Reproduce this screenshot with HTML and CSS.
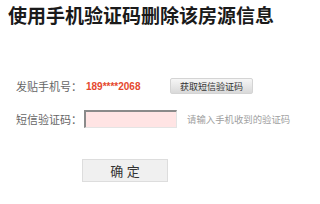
FILE: index.html
```html
<!DOCTYPE html>
<html lang="zh-CN">
<head>
    <meta charset="UTF-8">
    <title>使用手机验证码删除该房源信息</title>
    <link rel="stylesheet" href="styles.css">
</head>
<body>

<div class="page">
    <h2 class="title">使用手机验证码删除该房源信息</h2>

    <!-- 验证表单 -->
    <div class="verify-form">
        <div class="row">
            <span class="label">发贴手机号：</span>
            <span class="phone">189****2068</span>
            <button class="btn-code">获取短信验证码</button>
        </div>
        <div class="row">
            <span class="label">短信验证码：</span>
            <input type="text" class="code-input">
            <span class="hint">请输入手机收到的验证码</span>
        </div>
        <button class="btn-ok">确 定</button>
    </div>
</div>

</body>
</html>
```

FILE: styles.css
```css
body {
    margin: 0;
    padding: 0;
    background: #fff;
    font-family: "Liberation Sans", "Noto Sans CJK SC", sans-serif;
}

.page {
    padding: 6px 8px 0 8px;
}

.title {
    margin: 0;
    font-size: 19px;
    line-height: 22px;
    font-weight: bold;
    color: #1a1a1a;
}

.verify-form {
    padding-left: 8px;
    margin-top: 49px;
}

.row {
    display: flex;
    align-items: center;
    height: 18px;
    margin-bottom: 15px;
}

.label {
    width: 68px;
    font-size: 11px;
    color: #666;
}

.phone {
    width: 84px;
    padding-left: 2px;
    font-size: 10px;
    font-weight: bold;
    color: #e5482d;
}

.btn-code {
    height: 16px;
    width: 83px;
    padding: 0;
    border: 1px solid #d4d4d4;
    border-radius: 2px;
    background: linear-gradient(#f6f6f6, #d9d9d9);
    font-family: inherit;
    font-size: 9px;
    color: #333;
}

.code-input {
    box-sizing: border-box;
    width: 93px;
    height: 18px;
    margin: 0;
    padding: 0 3px;
    border-style: solid;
    border-width: 2px 1px 1px 2px;
    border-color: #8a8a8a #e4e4e4 #e4e4e4 #8a8a8a;
    background: #ffe4e4;
}

.hint {
    margin-left: 10px;
    font-size: 9.4px;
    color: #a0a0a0;
}

.btn-ok {
    display: block;
    width: 86px;
    height: 23px;
    margin: 31px 0 0 66px;
    border: 1px solid #ddd;
    background: #f0f0f0;
    font-family: inherit;
    font-size: 13px;
    color: #333;
}
```
